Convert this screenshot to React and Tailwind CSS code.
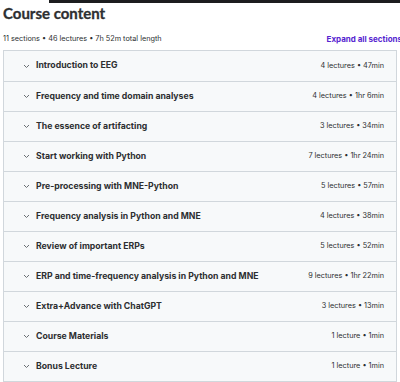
import React from "react";

const sections = [
  ["Introduction to EEG", "4 lectures • 47min"],
  ["Frequency and time domain analyses", "4 lectures • 1hr 6min"],
  ["The essence of artifacting", "3 lectures • 34min"],
  ["Start working with Python", "7 lectures • 1hr 24min"],
  ["Pre-processing with MNE-Python", "5 lectures • 57min"],
  ["Frequency analysis in Python and MNE", "4 lectures • 38min"],
  ["Review of important ERPs", "5 lectures • 52min"],
  ["ERP and time-frequency analysis in Python and MNE", "9 lectures • 1hr 22min"],
  ["Extra+Advance with ChatGPT", "3 lectures • 13min"],
  ["Course Materials", "1 lecture • 1min"],
  ["Bonus Lecture", "1 lecture • 1min"],
];

function Chevron() {
  return (
    <svg width="7" height="5" viewBox="0 0 7 5" className="shrink-0">
      <path d="M1 1 L3.5 3.5 L6 1" fill="none" stroke="#6a6f73" strokeWidth="1" />
    </svg>
  );
}

export default function App() {
  return (
    <div className="w-[400px] h-[382px] overflow-hidden bg-white font-['Inter',sans-serif] text-[#2d2f31]">
      <div className="flex justify-end">
        <div className="w-[351px] h-[3px] bg-[#1c1d1f]" />
      </div>
      <div className="pl-[3px] text-[15px] leading-[20px] font-bold font-['Lato',sans-serif] text-[#2d2f31] [-webkit-text-stroke:0.3px_#2d2f31]">Course content</div>
      <div className="flex justify-between items-center pl-[3px] mt-[9px] h-[14px]">
        <span className="text-[7.3px] text-[#2d2f31]">11 sections • 46 lectures • 7h 52m total length</span>
        <span className="text-[8px] font-bold text-[#5624d0] whitespace-nowrap -mr-[2px]">Expand all sections</span>
      </div>
      <div className="ml-[3px] mr-[3px] mt-[4px] border border-[#d1d7dc]">
        {sections.map(([t, m], i) => (
          <div
            key={i}
            className={`h-[30px] flex items-center bg-[#f7f9fa] pl-[19px] pr-[12px] ${i > 0 ? "border-t border-[#d1d7dc]" : ""}`}
          >
            <Chevron />
            <span className="ml-[6px] text-[8.7px] font-bold flex-1">{t}</span>
            <span className="text-[7.3px] text-[#2d2f31]">{m}</span>
          </div>
        ))}
      </div>
    </div>
  );
}
